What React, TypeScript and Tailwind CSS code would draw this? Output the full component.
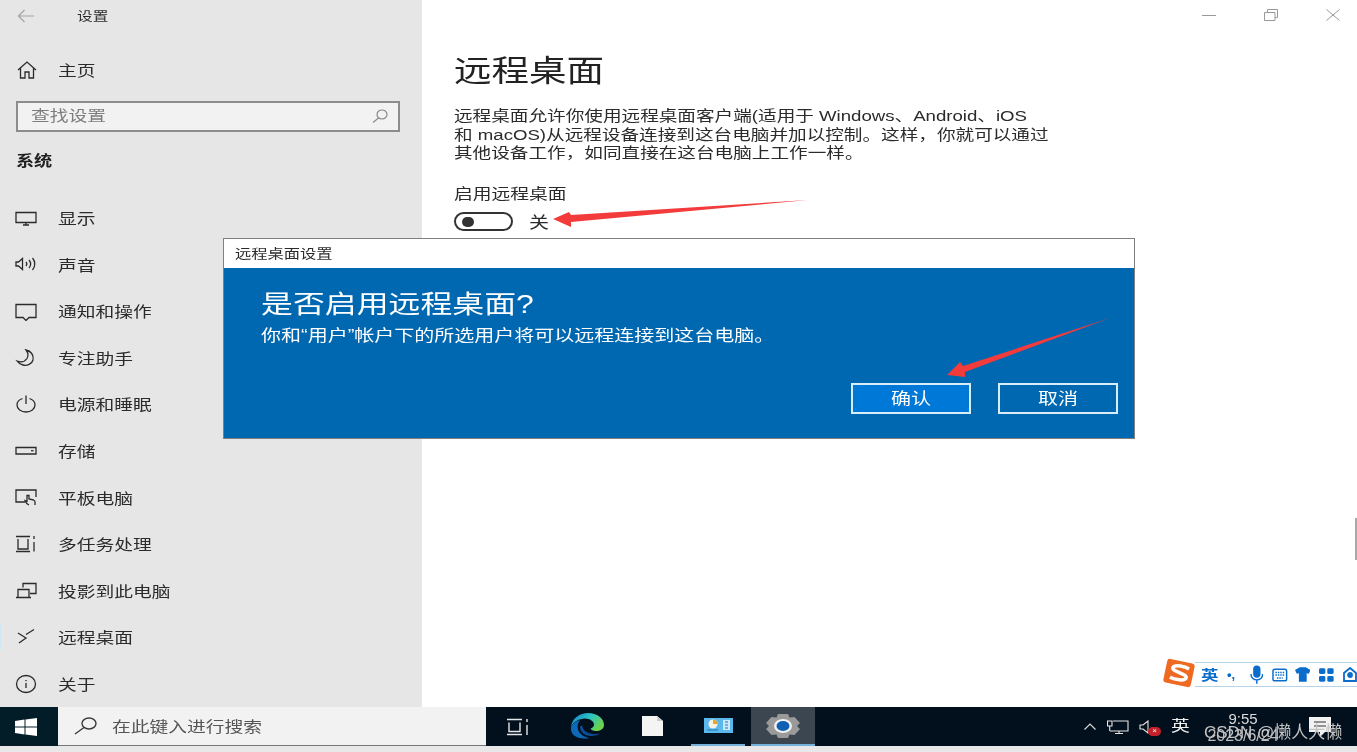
import React from 'react';

const Wide: React.FC<{ className?: string; children: React.ReactNode }> = ({ className = '', children }) => (
  <span className={`inline-block origin-left scale-x-125 whitespace-nowrap ${className}`}>{children}</span>
);

const Ico: React.FC<{ children: React.ReactNode }> = ({ children }) => (
  <svg width="22" height="20" viewBox="0 0 22 20" fill="none" stroke="currentColor" strokeWidth="1.3" className="shrink-0">
    {children}
  </svg>
);

const navItems: { label: string; icon: React.ReactNode }[] = [
  { label: '显示', icon: <><path d="M1 4.500h20v10H1z" /><path d="M8 17h6M11 14.500V17" /></> },
  { label: '声音', icon: <><path d="M1 8h2.500L7.500 4.500v11L3.500 12H1z" /><path d="M11 8c1 1.200 1 2.800 0 4M14 6c2 2.400 2 5.600 0 8M17.500 4c3 3.500 3 8.500 0 12" /></> },
  { label: '通知和操作', icon: <path d="M1 3.500h20v13h-7l-3 3-3-3H1z" /> },
  { label: '专注助手', icon: <path d="M11 2c5 1 8 5 7 10-1 4-6 6-10 5-3-.7-5-2.500-6-4 4 1.500 8 .5 10-2.500 1.500-2.500 1-6-1-8.500z" /> },
  { label: '电源和睡眠', icon: <><path d="M7.500 4.500C4 5.700 2 8 2 11c0 4 4 7 9 7s9-3 9-7c0-3-2-5.300-5.500-6.500" /><path d="M11 1.500V10" /></> },
  { label: '存储', icon: <><path d="M1 6.500h20v6.500H1z" /><path d="M16 9.700h2.500" /></> },
  { label: '平板电脑', icon: <><path d="M10 15H1V3h20v7" /><path d="M14 18c-2-1-3.500-3-4-4.500l2 .8V8.500h2V12l4.500 1c1 .3 1.500 1 1.500 2v3" /></> },
  { label: '多任务处理', icon: <><path d="M1 2.500h14M1 17.500h14M3 5v10h10V5" /><path d="M19 2v3M19 8v9.500" /></> },
  { label: '投影到此电脑', icon: <><path d="M8 6.500V2.500h13v10h-6" /><path d="M3 8.500h11v8H3zM1 16.500h15" /></> },
  { label: '远程桌面', icon: <path d="M3 6l8 5-7 5M19 2.500l-8 5" /> },
  { label: '关于', icon: <><ellipse cx="11" cy="10" rx="9.500" ry="8.500" /><path d="M11 9v5M11 6v1.300" /></> },
];

const App: React.FC = () => {
  return (
    <div className="relative flex h-[752px] w-[1357px] flex-col overflow-hidden bg-white font-['Liberation_Sans','Noto_Sans_CJK_SC',sans-serif] text-[#2b2b2b] blur-[0.5px]">
      <div className="flex h-[707px]">
        {/* Sidebar */}
        <aside className="relative flex w-[422px] flex-col bg-[#e6e6e6]">
          <div className="flex h-[32px] items-center">
            <svg width="18" height="14" viewBox="0 0 18 14" fill="none" stroke="#a3a3a3" strokeWidth="1.2" className="ml-[17px]">
              <path d="M17 7H1.500M7.500 1L1.500 7l6 6" />
            </svg>
            <Wide className="ml-[42px] mt-[2px] text-[12.500px]">设置</Wide>
          </div>

          <div className="mt-[15px] flex h-[46px] items-center pl-[17px]">
            <svg width="20" height="18" viewBox="0 0 20 18" fill="none" stroke="currentColor" strokeWidth="1.300">
              <path d="M1 9l9-8 9 8M3.500 7v10h4.500v-6h4v6h4.500V7" />
            </svg>
            <Wide className="ml-[21px] mt-[2px] text-[15px]">主页</Wide>
          </div>

          <div className="ml-[16px] mr-[22px] mt-[8px] flex h-[31px] items-center justify-between border-2 border-[#8c8c8c] bg-[#f2f2f2] pl-[13px] pr-[10px]">
            <Wide className="text-[15px] text-[#7d7d7d]">查找设置</Wide>
            <svg width="16" height="14" viewBox="0 0 16 14" fill="none" stroke="#8a8a8a" strokeWidth="1.200">
              <ellipse cx="10" cy="5.500" rx="5" ry="4.500" />
              <path d="M6.500 9L1 13.500" />
            </svg>
          </div>

          <div className="mt-[17px] flex h-[24px] items-center pl-[16px]">
            <Wide className="mt-[2px] text-[14.500px] font-bold text-[#1f1f1f]">系统</Wide>
          </div>

          <nav className="mt-[22px] flex flex-col">
            {navItems.map((item) => (
              <div key={item.label} className="flex h-[46.600px] items-center pl-[15px]">
                <Ico>{item.icon}</Ico>
                <Wide className="ml-[21px] mt-[3px] text-[15px]">{item.label}</Wide>
              </div>
            ))}
          </nav>

          <div className="absolute left-0 top-[623px] h-[27px] w-[1px] bg-[#cfe6f5]" />
        </aside>

        {/* Remote desktop page */}
        <main className="relative flex flex-1 flex-col pl-[32px]">
          <div className="flex h-[30px] items-center justify-end gap-[48px] pr-[17px] text-[#999999]">
            <svg width="14" height="14" viewBox="0 0 14 14" stroke="currentColor" strokeWidth="1"><path d="M0 7.500h14" /></svg>
            <svg width="14" height="14" viewBox="0 0 14 14" fill="none" stroke="currentColor" strokeWidth="1"><path d="M.5 4.500h10.500v8H.5zM3.500 4.500v-3h10v8H11" /></svg>
            <svg width="14" height="14" viewBox="0 0 14 14" stroke="currentColor" strokeWidth="1"><path d="M.5 1.500l13 11M13.500 1.500l-13 11" /></svg>
          </div>

          <h1 className="mt-[20px] flex h-[40px] items-center font-normal">
            <Wide className="text-[30px] text-[#222222]">远程桌面</Wide>
          </h1>

          <p className="mt-[17px] flex flex-col text-[14.900px] leading-[18.500px]">
            <Wide>远程桌面允许你使用远程桌面客户端(适用于 Windows、Android、iOS</Wide>
            <Wide>和 macOS)从远程设备连接到这台电脑并加以控制。这样，你就可以通过</Wide>
            <Wide>其他设备工作，如同直接在这台电脑上工作一样。</Wide>
          </p>

          <div className="mt-[20px] flex h-[22px] items-center">
            <Wide className="mt-[2px] text-[15px]">启用远程桌面</Wide>
          </div>

          <div className="mt-[4px] flex items-center">
            <div className="flex h-[19px] w-[59px] items-center rounded-full border-[2.500px] border-[#333333] pl-[6px]">
              <div className="h-[10px] w-[12px] rounded-full bg-[#333333]" />
            </div>
            <Wide className="ml-[16px] mt-[2px] text-[16px]">关</Wide>
          </div>

          <div className="absolute right-0 top-[518px] h-[42px] w-[2px] bg-[#a8a8a8]" />
        </main>
      </div>

      {/* Taskbar */}
      <footer className="flex h-[39px] items-stretch bg-[#020f1c] text-white">
        <div className="flex w-[58px] items-center bg-[#021c28] pl-[15px]">
          <svg width="22" height="18" viewBox="0 0 22 18" fill="#ffffff">
            <path d="M0 3l9.500-1.400V8.500H0zM10.500 1.400L22 0v8.500H10.500zM0 9.500h9.500v6.900L0 15zM10.500 9.500H22V18l-11.500-1.500z" />
          </svg>
        </div>
        <div className="flex w-[428px] items-center border-b border-[#777777] bg-[#f2f2f2] pl-[16px]">
          <svg width="23" height="18" viewBox="0 0 23 18" fill="none" stroke="#3a3a3a" strokeWidth="1.400">
            <ellipse cx="15" cy="6.500" rx="7" ry="5.500" />
            <path d="M10 10.500L1 17" />
          </svg>
          <Wide className="ml-[15px] mt-[2px] text-[15px] text-[#555555]">在此键入进行搜索</Wide>
        </div>

        <div className="flex w-[64px] items-center justify-center">
          <svg width="24" height="18" viewBox="0 0 24 18" fill="none" stroke="#e6e6e6" strokeWidth="1.400">
            <path d="M1 1.500h15M1 16.500h15M3 4.500v9h11v-9M21 1v3M21 7v10" />
          </svg>
        </div>
        <div className="flex w-[74px] items-center justify-center pb-[1px]">
          <svg width="34" height="26" viewBox="0 0 34 26">
            <defs>
              <linearGradient id="edgeTop" x1="0" y1="0" x2="1" y2="0.500">
                <stop offset="0" stopColor="#0f7fd0" />
                <stop offset="0.550" stopColor="#2cc3c4" />
                <stop offset="1" stopColor="#6ad24e" />
              </linearGradient>
            </defs>
            <path d="M1 14C2 5 10 0 18 0c9 0 16 5 16 12 0 4-4 6-8 6-3 0-5-1-5.500-2.500 2-.5 3.500-2 3.500-4 0-3-4-6-9-6C9 5.500 3 9 1 14z" fill="url(#edgeTop)" />
            <path d="M1 14c2-4 6-6.500 9-6.500-2 2-3 5-2 9 1 4 6 8 12 8.500-2 .5-4 .5-6 .5C6 25.500 0 21 1 14z" fill="#0c69b8" />
            <path d="M10 14c0 5 5 9 11 9 4 0 7-1 9.500-3-2 1-5 1.500-8 1C17 20 13 18 12 12.500c-1 .3-2 .8-2 1.500z" fill="#0a4f9a" />
          </svg>
        </div>
        <div className="flex w-[56px] items-center justify-center pb-[1px]">
          <svg width="23" height="22" viewBox="0 0 23 22">
            <path d="M1 1h15l6 5v15H1z" fill="#f4f4f4" />
            <path d="M16 1v5h6z" fill="#cfcfcf" />
          </svg>
        </div>
        <div className="ml-[11px] flex w-[54px] items-center justify-center border-b-2 border-[#76b1dc]">
          <svg width="29" height="15" viewBox="0 0 29 15">
            <path d="M0 0h29v15H0z" fill="#5ab8ec" />
            <circle cx="9" cy="6" r="4.500" fill="#f6f3e4" />
            <path d="M9 1.500a4.500 4.500 0 0 1 4.500 4.500H9z" fill="#e6a52c" />
            <path d="M19 2h7v10h-7z" fill="#cbe9f8" />
            <path d="M21 4h3M21 7h3M21 10h3M3 12h11" stroke="#1d76b5" strokeWidth="1" />
          </svg>
        </div>
        <div className="ml-[6px] flex w-[64px] items-center justify-center border-b-2 border-[#76b1dc] bg-[#3b4650]">
          <svg width="34" height="24" viewBox="0 0 34 24">
            <path d="M12 0h10l1.500 3.500 5-.5L34 9l-3 3 3 3-5.500 6-5-.5L22 24H12l-1.500-3.500-5 .5L0 15l3-3-3-3 5.500-6 5 .5z" fill="#9a9a9a" />
            <ellipse cx="17" cy="12" rx="9" ry="7" fill="#f2f2f2" />
            <ellipse cx="17" cy="12" rx="6.500" ry="5" fill="#0f5fb4" />
          </svg>
        </div>

        <div className="flex-1" />

        <div className="flex items-center pr-[26px]">
          <svg width="12" height="7" viewBox="0 0 12 7" fill="none" stroke="#d9d9d9" strokeWidth="1.200"><path d="M.5 6.500L6 1l5.500 5.500" /></svg>
          <svg width="22" height="14" viewBox="0 0 22 14" fill="none" stroke="#e6e6e6" strokeWidth="1.100" className="ml-[11px]">
            <path d="M6 1h15v10H3M12 11v2.500M8 13.500h8M.5 1H5v5H.5zM2.700 6v5" />
          </svg>
          <div className="relative ml-[10px] w-[22px]">
            <svg width="16" height="14" viewBox="0 0 16 14" fill="none" stroke="#e6e6e6" strokeWidth="1.100">
              <path d="M1 5h3l5-4v12L4 9H1z" />
            </svg>
            <span className="absolute left-[9px] top-[7px] flex h-[9px] w-[13px] items-center justify-center rounded-full bg-[#c2202a] text-[8px] leading-none text-white">×</span>
          </div>
          <Wide className="ml-[10px] w-[20px] text-[15px] text-[#f0f0f0]">英</Wide>
          <div className="ml-[10px] flex w-[84px] flex-col items-center text-[#dcdcdc]">
            <span className="text-[15px] leading-[17px]">9:55</span>
            <span className="text-[16px] leading-[17px] text-[#bdbdbd]">2023/6/24</span>
          </div>
          <svg width="22" height="20" viewBox="0 0 22 20" className="ml-[24px]">
            <path d="M0 0h22v15h-6l-5 5v-5H0z" fill="#f2f2f2" />
            <path d="M5 5h12M5 9h12" stroke="#333333" strokeWidth="1.200" />
          </svg>
        </div>
      </footer>
      <div className="flex-1 bg-[#e8e8e8]" />

      {/* CSDN watermark over the clock */}
      <span className="absolute left-[1204px] top-[723px] whitespace-nowrap text-[17px] leading-[20px] text-[#c4c4c4]">CSDN @懒人大懒</span>

      {/* Dialog */}
      <div className="absolute left-[223px] top-[238px] flex h-[201px] w-[912px] flex-col border border-[#808080]">
        <div className="flex h-[29px] items-center bg-white pl-[11px]">
          <Wide className="text-[13px]">远程桌面设置</Wide>
        </div>
        <div className="flex flex-1 flex-col bg-[#0068b1] pl-[37px] text-white">
          <div className="mt-[16px] flex h-[40px] items-center">
            <Wide className="text-[25.500px]">是否启用远程桌面?</Wide>
          </div>
          <div className="mt-[1px] flex h-[22px] items-center">
            <Wide className="text-[16px]">你和“用户”帐户下的所选用户将可以远程连接到这台电脑。</Wide>
          </div>
          <div className="mb-[24px] mt-auto flex justify-end gap-[27px] pr-[16px]">
            <button className="flex h-[31px] w-[120px] items-center justify-center border-2 border-[#d7eefa] bg-[#0078d7]">
              <span className="inline-block scale-x-125 text-[16px]">确认</span>
            </button>
            <button className="flex h-[31px] w-[120px] items-center justify-center border-2 border-[#d7eefa] bg-[#0068b1]">
              <span className="inline-block scale-x-125 text-[16px]">取消</span>
            </button>
          </div>
        </div>
      </div>

      {/* Red annotation arrows */}
      <svg width="1357" height="752" viewBox="0 0 1357 752" className="pointer-events-none absolute inset-0" fill="#f43b3b">
        <path d="M553 219L569 212L571 215L808 200L571 222L571 227z" />
        <path d="M947 375L960 362L963 366L1110 318L965 372L965 377z" />
      </svg>

      {/* Sogou IME bar */}
      <div className="absolute left-[1195px] top-[662px] flex h-[25px] w-[162px] items-center border-y border-[#b5d3e8] bg-white text-[#0a6ccb]">
        <span className="ml-[6px] inline-block w-[14px] origin-left scale-x-125 text-[14px] font-bold leading-none">英</span>
        <span className="ml-[12px] w-[19px] text-[13px] font-bold leading-none">•,</span>
        <svg width="14" height="20" viewBox="0 0 14 20" fill="none" stroke="currentColor" strokeWidth="1.500" className="ml-[4px]">
          <rect x="4" y="1" width="6" height="11" rx="3" fill="currentColor" />
          <path d="M1 9c0 8 12 8 12 0M7 15v4" />
        </svg>
        <svg width="16" height="14" viewBox="0 0 16 14" fill="none" stroke="currentColor" strokeWidth="1.500" className="ml-[9px]">
          <rect x="1" y="1" width="14" height="12" rx="2" />
          <path d="M3.500 4.500h9M3.500 7h9M5 10h6" strokeDasharray="1.500 1" />
        </svg>
        <svg width="16" height="15" viewBox="0 0 16 15" fill="currentColor" className="ml-[7px]">
          <path d="M5 0h6l5 3-2 4-2-1v9H4V6L2 7 0 3z" />
        </svg>
        <svg width="15" height="14" viewBox="0 0 15 14" fill="currentColor" className="ml-[9px]">
          <rect x="0" y="0" width="6.500" height="6" rx="1.500" />
          <rect x="8.500" y="0" width="6.500" height="6" rx="1.500" />
          <rect x="0" y="8" width="6.500" height="6" rx="1.500" />
          <rect x="8.500" y="8" width="6.500" height="6" rx="1.500" />
        </svg>
        <svg width="14" height="16" viewBox="0 0 14 16" fill="none" stroke="currentColor" strokeWidth="1.800" className="ml-[9px] shrink-0">
          <path d="M7 1l6 5v8H1V6z" />
          <circle cx="7" cy="8" r="2" fill="currentColor" />
        </svg>
      </div>
      <svg width="34" height="32" viewBox="0 0 34 32" className="absolute left-[1162px] top-[657px]">
        <g transform="rotate(12 17 16)">
          <rect x="3" y="4" width="28" height="24" rx="3" fill="#ee6a23" />
          <path d="M26 10c-4-1.500-15-2-16 2s15 3 15 7-11 4.500-16 3" fill="none" stroke="#ffffff" strokeWidth="3.500" />
        </g>
      </svg>
    </div>
  );
};

export default App;
